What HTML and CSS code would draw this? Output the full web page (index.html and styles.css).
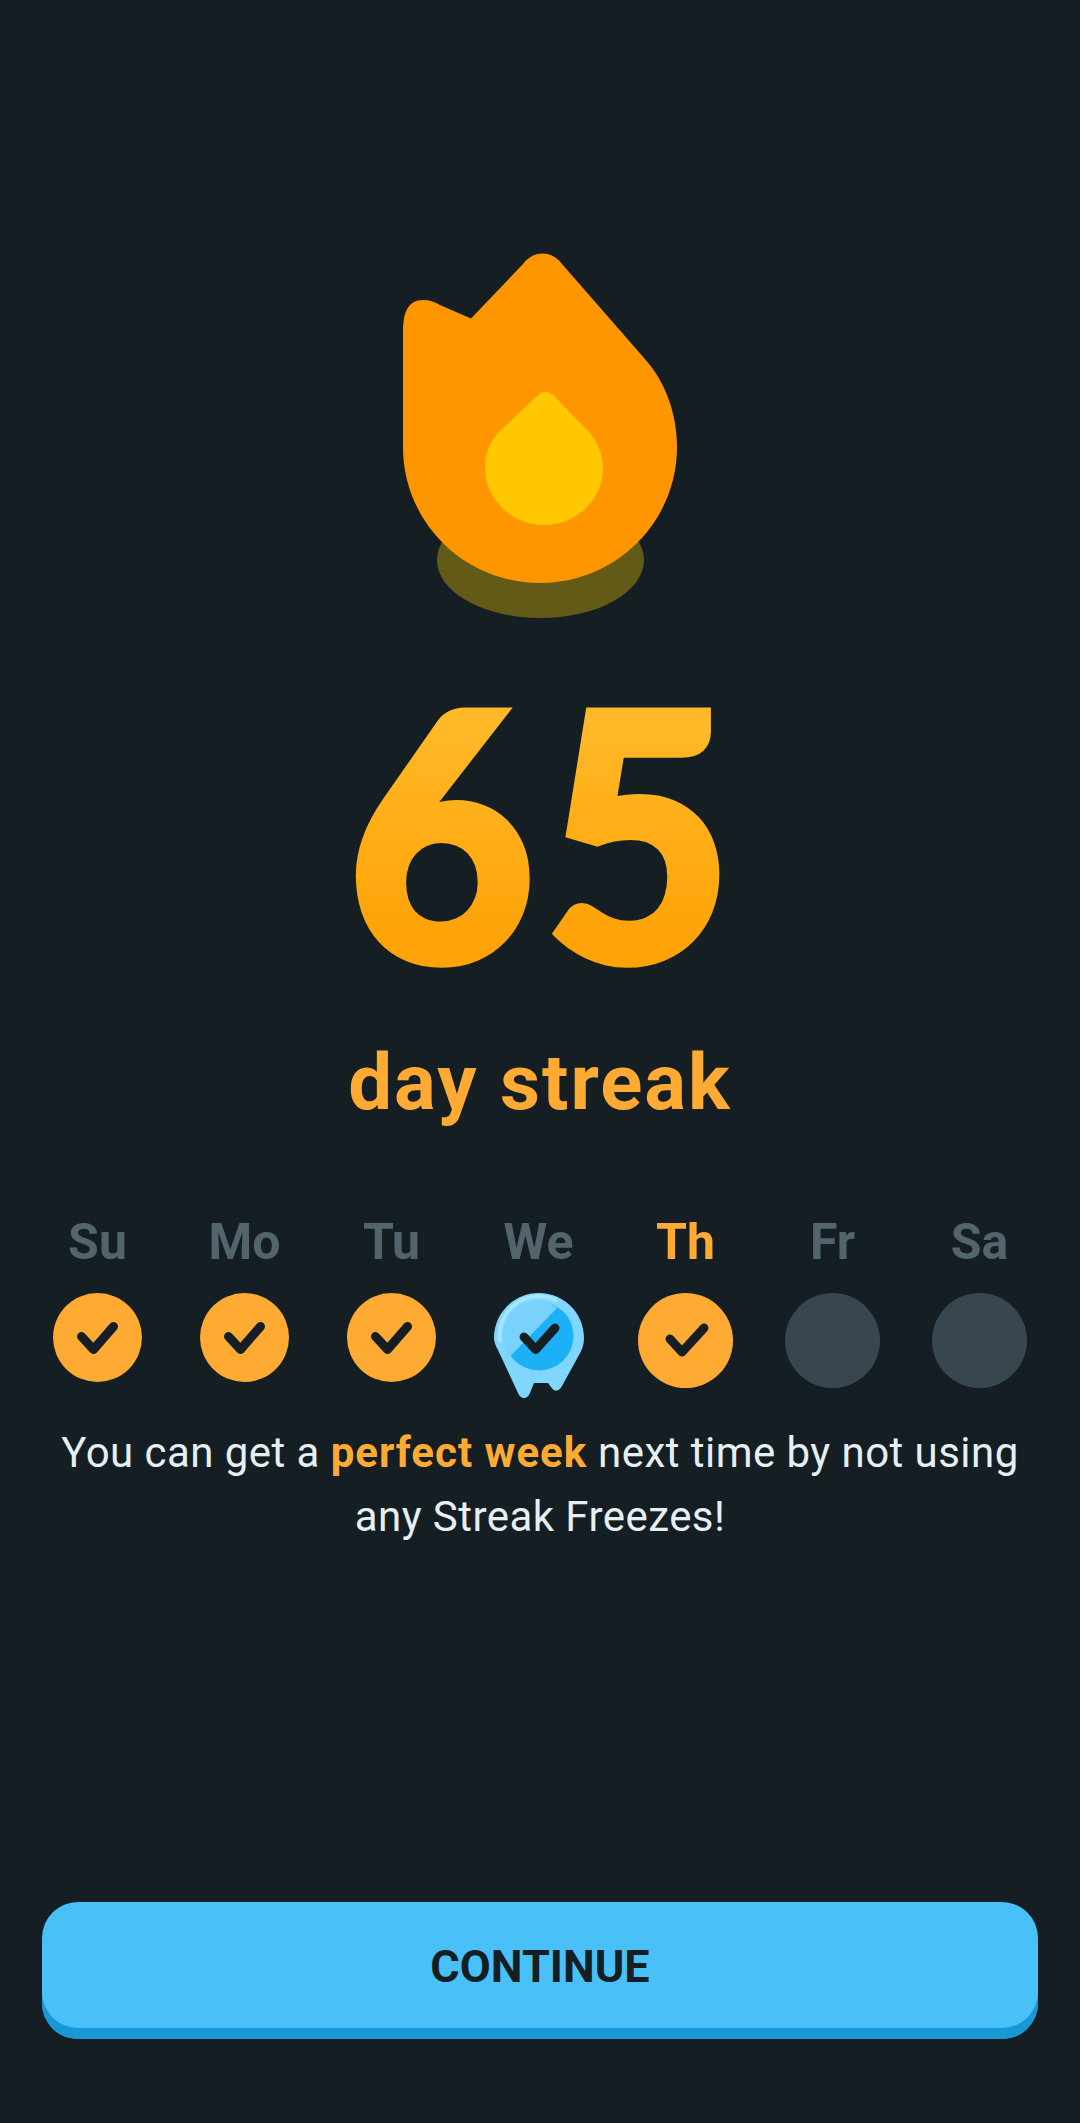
FILE: index.html
```html
<!DOCTYPE html>
<html lang="en">
<head>
<meta charset="utf-8">
<title>Streak</title>
<link rel="stylesheet" href="styles.css">
</head>
<body>
<main class="screen">
  <svg class="flame" viewBox="390 250 300 370" aria-hidden="true">
    <ellipse cx="540.5" cy="560" rx="103.5" ry="58" fill="#635a17"/>
    <path fill="#ff9600" d="M403 333 C403 312 408 300 423 300 C430 300 435 302 440 305 L471 318.5 L523 264 C533 250 552 250 562 264 L644 358 C665 381 677 413 677 447 C677 522 616 583 540 583 C464 583 403 522 403 447 Z"/>
    <path fill="#ffc800" d="M538 395 C542 391 549 391 553 395 L588 431 C597 441 603 454 603 468 C603 500 576 525 544 525 C512 525 485 500 485 467 C485 452 491 440 500 431 Z"/>
  </svg>
  <div class="count">65</div>
  <div class="label">day streak</div>
  <section class="week">
    <div class="day">
      <span class="day-name">Su</span>
      <span class="mark mark-done"><svg class="tick" viewBox="0 0 89 89"><path d="M28.500 43.500 L40.500 56.500 L60.500 33.500"/></svg></span>
    </div>
    <div class="day">
      <span class="day-name">Mo</span>
      <span class="mark mark-done"><svg class="tick" viewBox="0 0 89 89"><path d="M28.500 43.500 L40.500 56.500 L60.500 33.500"/></svg></span>
    </div>
    <div class="day">
      <span class="day-name">Tu</span>
      <span class="mark mark-done"><svg class="tick" viewBox="0 0 89 89"><path d="M28.500 43.500 L40.500 56.500 L60.500 33.500"/></svg></span>
    </div>
    <div class="day">
      <span class="day-name">We</span>
      <svg class="freeze" viewBox="495 1293 90 106" aria-hidden="true">
        <path fill="#7fd6ff" d="M540 1293 C565 1293 585 1313 585 1338 C585 1345 583 1350 580 1355 L563 1386 C560 1392 555 1392 552 1387 L549 1383 L535 1383 L530.500 1394 C528 1399.500 522 1399.500 519.500 1394 L499 1350 C496 1345 495 1341 495 1338 C495 1313 515 1293 540 1293 Z"/>
        <circle cx="540" cy="1336" r="34.500" fill="#1cb0f6"/>
        <path fill="#79d2fb" d="M558.300 1307.700 L510.700 1356.700 A34.500 34.500 0 0 1 558.300 1307.700 Z"/>
        <path class="freeze-shine" d="M500.700 1340 A39.500 39.500 0 0 1 556.700 1300"/>
        <path class="freeze-tick" d="M525 1337 L536.700 1349.500 L556 1328"/>
      </svg>
    </div>
    <div class="day">
      <span class="day-name day-name-today">Th</span>
      <span class="mark mark-today"><svg class="tick" viewBox="0 0 95 95"><path d="M32 46 L44 59 L66 35"/></svg></span>
    </div>
    <div class="day">
      <span class="day-name">Fr</span>
      <span class="mark mark-empty"></span>
    </div>
    <div class="day">
      <span class="day-name">Sa</span>
      <span class="mark mark-empty"></span>
    </div>
  </section>
  <p class="message">You can get a <strong class="accent">perfect week</strong> next time by not using<br>any Streak Freezes!</p>
  <button class="continue" type="button">CONTINUE</button>
</main>
</body>
</html>
```
FILE: styles.css
```css
* { box-sizing: border-box; }
html, body { margin: 0; padding: 0; background: #151f23; }
body { font-family: Roboto, "Liberation Sans", sans-serif; }
.screen {
  height: 2123px;
  padding: 250px 42px 84px;
  display: flex;
  flex-direction: column;
  align-items: center;
  background: #151f23;
}
.flame { display: block; width: 300px; height: 370px; flex: none; }
.count {
  margin: 26px 0 0 10px;
  height: 364px;
  font-family: Lato, Roboto, sans-serif;
  font-size: 344px;
  line-height: 364px;
  font-weight: 900;
  letter-spacing: 10px;
  transform: scaleX(0.94);
  -webkit-text-stroke: 8px transparent;
  background: linear-gradient(180deg, #ffb928 20%, #ffa308 80%);
  -webkit-background-clip: text;
  background-clip: text;
  color: transparent;
}
.label {
  margin-top: 27px;
  font-size: 78px;
  line-height: 92px;
  font-weight: 700;
  letter-spacing: 2px;
  color: #ffab33;
}
.week {
  align-self: flex-start;
  margin: 85px 0 0 -18px;
  display: grid;
  grid-template-columns: repeat(7, 147px);
}
.day { display: flex; flex-direction: column; align-items: center; }
.day-name {
  height: 56px;
  margin-bottom: 23px;
  font-size: 50px;
  line-height: 56px;
  font-weight: 700;
  color: #52656d;
}
.day-name-today { color: #ffab33; }
.mark { display: block; border-radius: 50%; }
.mark-done { width: 89px; height: 89px; background: #ffab33; }
.mark-today { width: 95px; height: 95px; background: #ffab33; }
.mark-empty { width: 95px; height: 95px; background: #37464f; }
.tick { display: block; width: 100%; height: 100%; }
.tick path, .freeze-tick {
  fill: none;
  stroke: #151f23;
  stroke-width: 9;
  stroke-linecap: round;
  stroke-linejoin: round;
}
.freeze { display: block; width: 90px; height: 106px; }
.freeze-shine { fill: none; stroke: #a8e4ff; stroke-width: 4; stroke-linecap: round; }
.message {
  margin: 22px -30px 0;
  text-align: center;
  font-size: 42px;
  line-height: 64px;
  font-weight: 400;
  letter-spacing: 0.45px;
  color: #e5eff5;
  white-space: nowrap;
}
.accent { font-weight: 700; letter-spacing: 1px; color: #ffab33; }
.continue {
  margin-top: auto;
  flex: none;
  width: 996px;
  height: 137px;
  padding: 0 0 9px;
  border: 0;
  border-radius: 36px;
  background: #49c0f8;
  box-shadow: inset 0 -11px 0 #1899d6;
  font-family: inherit;
  font-size: 45px;
  font-weight: 700;
  color: #151f23;
}
```
